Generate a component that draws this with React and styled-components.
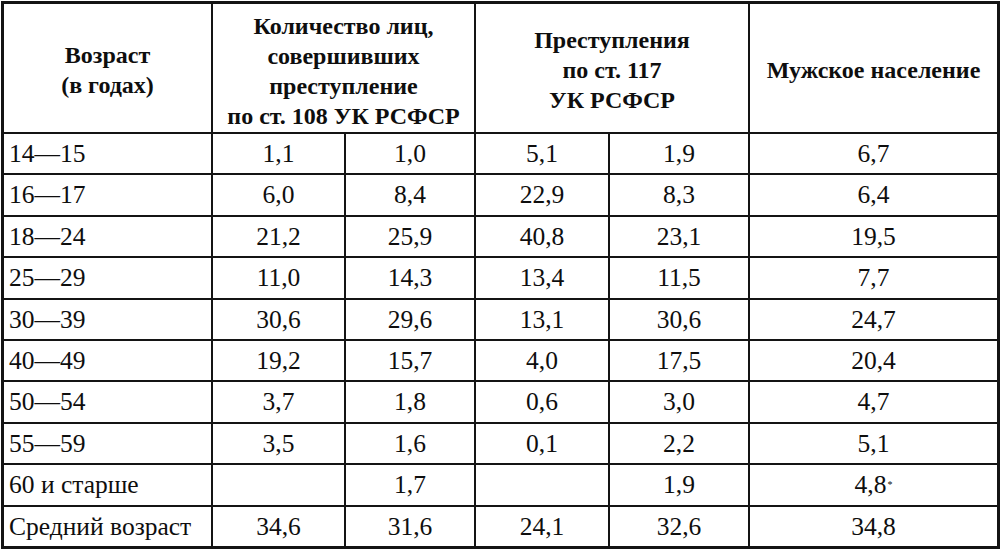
import styled, { createGlobalStyle } from "styled-components";

const GlobalStyle = createGlobalStyle`
  html, body {
    margin: 0;
    padding: 0;
    background: #ffffff;
    font-family: "Liberation Serif", "Times New Roman", serif;
  }
`;

const Table = styled.div`
  display: grid;
  grid-template-columns: 207px 131px 128px 132px 138px 247px;
  grid-template-rows: 128px repeat(10, 1fr);
  gap: 2px;
  width: 999px;
  height: 548px;
  box-sizing: border-box;
  margin: 1px 0 0 1px;
  padding: 3px;
  background: #141414;
  color: #0e0e0e;
`;

const HeadCell = styled.div`
  grid-column: span ${(p) => p.span || 1};
  background: #ffffff;
  display: flex;
  align-items: center;
  justify-content: center;
  text-align: center;
  font-family: "Liberation Serif", "Times New Roman", serif;
  font-weight: 700;
  font-size: 24px;
  line-height: 30px;
  padding-top: ${(p) => p.shift || 0}px;
`;

const Cell = styled.div`
  background: #ffffff;
  display: flex;
  align-items: center;
  justify-content: ${(p) => (p.left ? "flex-start" : "center")};
  padding-left: ${(p) => (p.left ? "5px" : "0")};
  font-family: "Liberation Serif", "Times New Roman", serif;
  font-size: 25.5px;
  line-height: 1;
`;

const Mark = styled.sup`
  font-size: 10px;
  vertical-align: 11px;
  margin-left: 1px;
`;

const rows = [
  ["14—15", "1,1", "1,0", "5,1", "1,9", "6,7"],
  ["16—17", "6,0", "8,4", "22,9", "8,3", "6,4"],
  ["18—24", "21,2", "25,9", "40,8", "23,1", "19,5"],
  ["25—29", "11,0", "14,3", "13,4", "11,5", "7,7"],
  ["30—39", "30,6", "29,6", "13,1", "30,6", "24,7"],
  ["40—49", "19,2", "15,7", "4,0", "17,5", "20,4"],
  ["50—54", "3,7", "1,8", "0,6", "3,0", "4,7"],
  ["55—59", "3,5", "1,6", "0,1", "2,2", "5,1"],
  ["60 и старше", "", "1,7", "", "1,9", "4,8*"],
  ["Средний возраст", "34,6", "31,6", "24,1", "32,6", "34,8"],
];

function Value({ text }) {
  if (text.endsWith("*")) {
    return (
      <>
        {text.slice(0, -1)}
        <Mark>*</Mark>
      </>
    );
  }
  return text;
}

export default function App() {
  return (
    <>
      <GlobalStyle />
      <Table>
        <HeadCell shift={4}>
          Возраст
          <br />
          (в годах)
        </HeadCell>
        <HeadCell span={2} shift={5}>
          Количество лиц,
          <br />
          совершивших
          <br />
          преступление
          <br />
          по ст. 108 УК РСФСР
        </HeadCell>
        <HeadCell span={2} shift={4}>
          Преступления
          <br />
          по ст. 117
          <br />
          УК РСФСР
        </HeadCell>
        <HeadCell shift={4}>Мужское население</HeadCell>

        {rows.map((row) =>
          row.map((value, i) => (
            <Cell key={row[0] + i} left={i === 0}>
              <Value text={value} />
            </Cell>
          ))
        )}
      </Table>
    </>
  );
}
